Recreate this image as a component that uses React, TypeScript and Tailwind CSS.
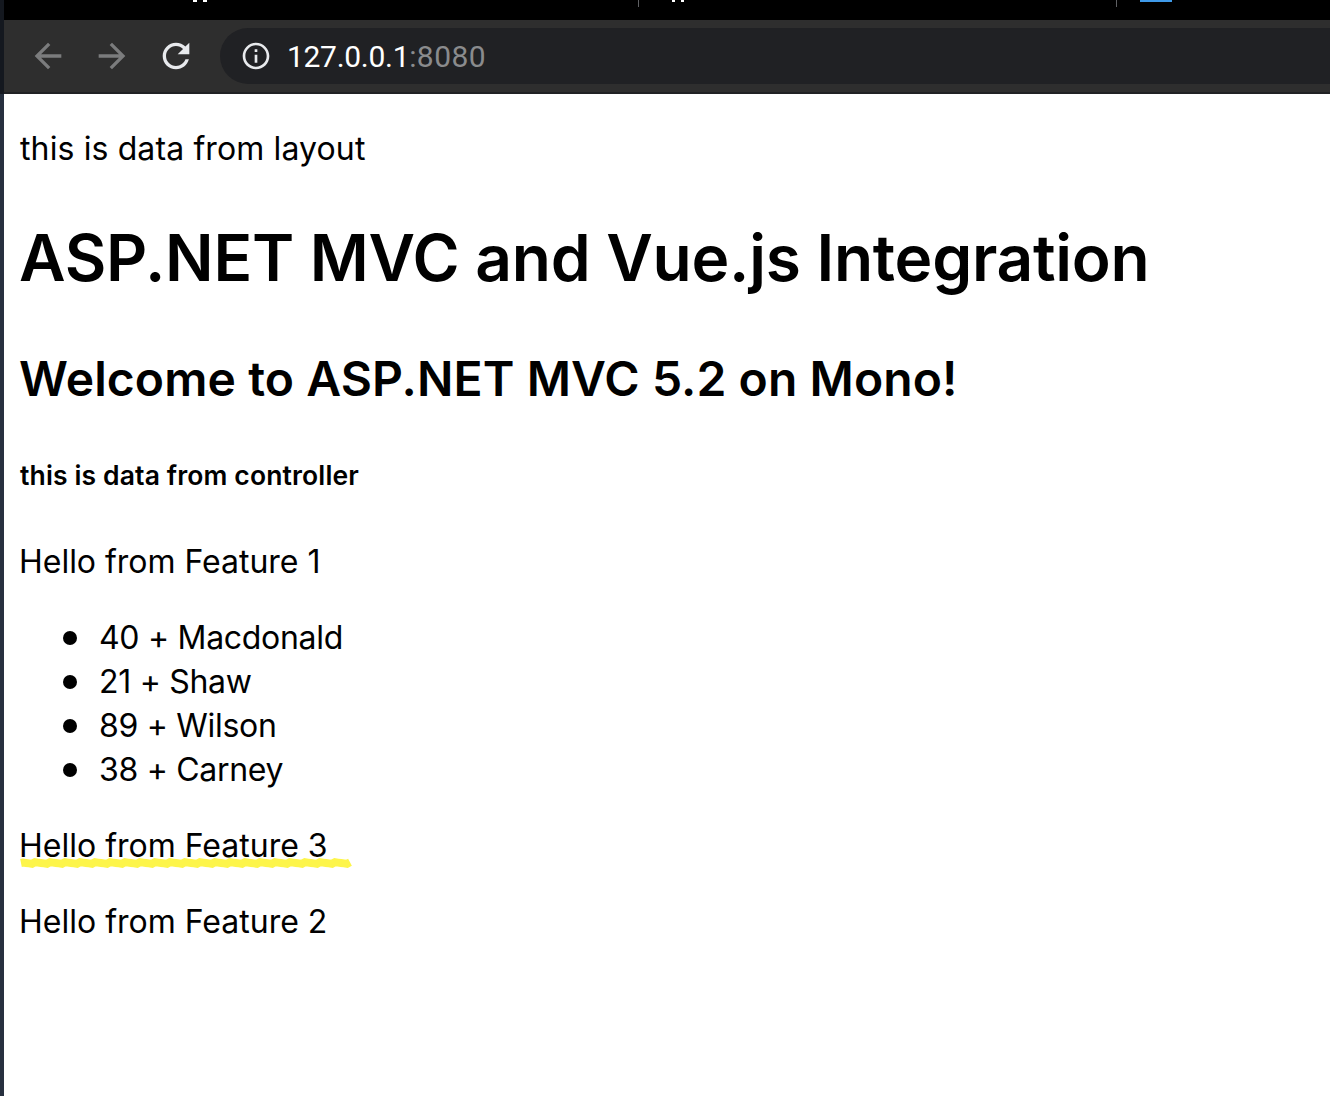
// Browser chrome on top, the test page below it
const BackIcon = () => (
  <svg width="40" height="40" viewBox="0 0 24 24" fill="#7b7c7d">
    <path d="M20 11H7.83l5.59-5.59L12 4l-8 8 8 8 1.41-1.41L7.83 13H20v-2z" />
  </svg>
);

const ForwardIcon = () => (
  <svg width="40" height="40" viewBox="0 0 24 24" fill="#7b7c7d">
    <path d="M12 4l-1.41 1.41L16.17 11H4v2h12.17l-5.58 5.59L12 20l8-8z" />
  </svg>
);

const ReloadIcon = () => (
  <svg width="40" height="40" viewBox="0 0 24 24" fill="#e8eaed">
    <path d="M17.65 6.35C16.2 4.9 14.21 4 12 4c-4.42 0-7.99 3.58-7.99 8s3.57 8 7.99 8c3.73 0 6.84-2.55 7.73-6h-2.08c-.82 2.33-3.04 4-5.65 4-3.31 0-6-2.69-6-6s2.69-6 6-6c1.66 0 3.14.69 4.22 1.78L13 11h7V4l-2.35 2.35z" />
  </svg>
);

const InfoIcon = () => (
  <svg width="32" height="32" viewBox="0 0 24 24" fill="#e8eaed">
    <path d="M11 7h2v2h-2zm0 4h2v6h-2zm1-9C6.48 2 2 6.48 2 12s4.48 10 10 10 10-4.48 10-10S17.52 2 12 2zm0 18c-4.41 0-8-3.59-8-8s3.59-8 8-8 8 3.59 8 8-3.59 8-8 8z" />
  </svg>
);

const TabStrip = () => (
  <div className="relative h-5 bg-black">
    <div className="absolute left-[189px] top-0 h-[2px] w-[4px] bg-white" />
    <div className="absolute left-[199px] top-0 h-[2px] w-[4px] bg-white" />
    <div className="absolute left-[634px] top-0 h-[7px] w-px bg-[#5f6063]" />
    <div className="absolute left-[668px] top-0 h-[2px] w-[3px] bg-white" />
    <div className="absolute left-[677px] top-0 h-[2px] w-[3px] bg-white" />
    <div className="absolute left-[1112px] top-0 h-[7px] w-px bg-[#5f6063]" />
    <div className="absolute left-[1136px] top-0 h-[2px] w-[32px] bg-[#3f9ae8]" />
  </div>
);

const Toolbar = () => (
  <div className="flex h-[74px] items-start border-b-2 border-[#202124] bg-[#2e2e2e] pt-2">
    <div className="flex h-14 items-center gap-6 pl-6">
      <BackIcon />
      <ForwardIcon />
      <ReloadIcon />
    </div>
    <div className="ml-6 flex h-14 flex-1 items-center rounded-l-[28px] bg-[#202124] pl-[20px]">
      <InfoIcon />
      <span className="ml-[15px] font-['Roboto',sans-serif] text-[30px] tracking-[-0.3px] text-white">
        127.0.0.1<span className="tracking-[0.4px] text-[#8a8b8d]">:8080</span>
      </span>
    </div>
  </div>
);

// rough marker stroke under the third line
const Squiggle = () => {
  let d = 'M1 5';
  for (let x = 3; x <= 330; x += 3) {
    d += ` L${x} ${5 + ((x * 7) % 5 - 2) * 0.4}`;
  }
  return (
    <svg className="absolute top-[34px] left-0" width="332" height="10" viewBox="0 0 332 10">
      <path d={d} fill="none" stroke="#fdf54a" strokeWidth="8" />
    </svg>
  );
};

const people = ['40 + Macdonald', '21 + Shaw', '89 + Wilson', '38 + Carney'];

export default function App() {
  return (
    <div className="flex h-[1096px] flex-col overflow-hidden bg-white font-['Inter',sans-serif] text-black">
      <div className="border-l-4 border-[#14181f]">
        <TabStrip />
        <Toolbar />
      </div>
      <div className="flex-1 border-l-4 border-[#27303f] px-4 text-[32px] leading-[44px]">
        <p className="mt-[33px] tracking-[0.12px]">this is data from layout</p>
        <h1 className="mt-[42px] -ml-px text-[64px] leading-[90px] font-semibold tracking-[-0.25px]">ASP.NET MVC and Vue.js Integration</h1>
        <h2 className="mt-[43px] -ml-px text-[48px] leading-[66px] font-semibold tracking-[0.1px]">Welcome to ASP.NET MVC 5.2 on Mono!</h2>
        <h5 className="mt-10 text-[26.5px] leading-[46px] font-semibold tracking-[0.13px]">this is data from controller</h5>
        <p className="mt-[42px] -ml-px tracking-[-0.02px]">Hello from Feature 1</p>
        <ul className="mt-8 pl-[79px] tracking-[-0.3px]">
          {people.map(name => (
            <li key={name} className="relative before:absolute before:top-[15px] before:left-[-36px] before:size-[14px] before:rounded-full before:bg-black">
              {name}
            </li>
          ))}
        </ul>
        <div className="relative mt-8">
          <p className="-ml-px">Hello from Feature 3</p>
          <Squiggle />
        </div>
        <p className="mt-8 -ml-px">Hello from Feature 2</p>
      </div>
    </div>
  );
}
